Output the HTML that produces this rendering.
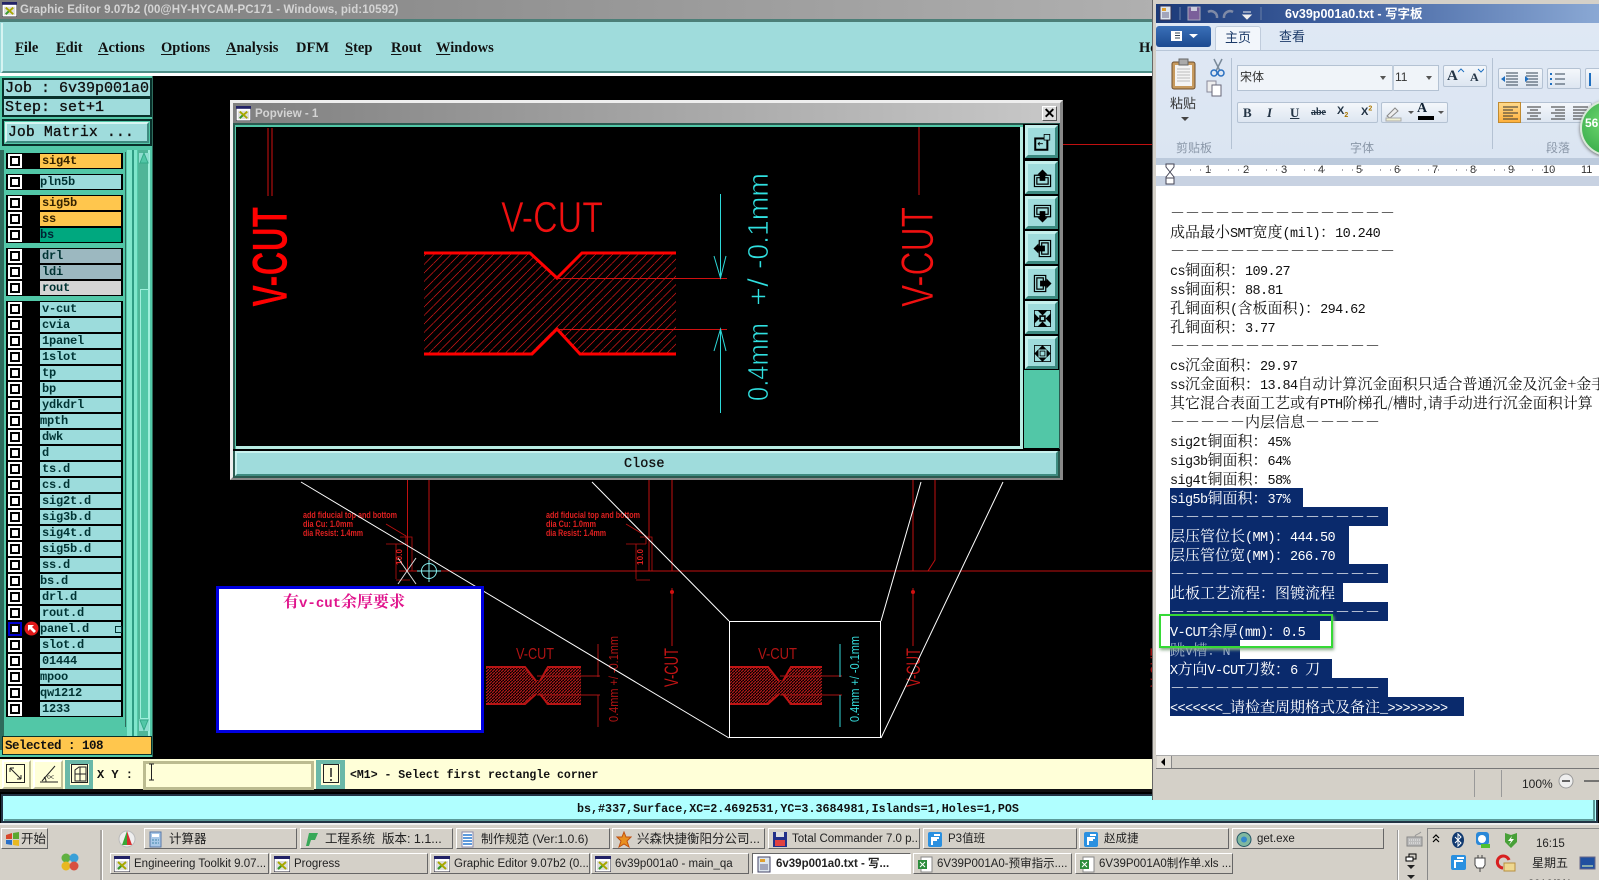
<!DOCTYPE html>
<html><head><meta charset="utf-8"><title>Graphic Editor</title>
<style>
html,body{margin:0;padding:0;background:#000}
#p{position:relative;width:1599px;height:880px;overflow:hidden;background:#000;font-family:"Liberation Sans","Noto Sans CJK SC",sans-serif}
#p div,#p span.a,#p svg.a{position:absolute}
.m{top:39px;font:bold 14.5px/18px "Liberation Serif",serif;color:#111;white-space:nowrap}
.m u{text-underline-offset:2px}
.mono{font-family:"Liberation Mono",monospace;color:#111;white-space:pre}
.st{-webkit-text-stroke:.35px #111}
.r{left:6px;width:117px;height:16px;background:#000}
.r i{position:absolute;left:2px;top:1px;width:14px;height:14px;background:#fff;box-shadow:inset 0 0 0 2px #fff,inset 0 0 0 4px #000}
.r b{position:absolute;left:34px;top:1px;width:81px;height:14px;background:#9cdcdc;font:bold 12px/14px "Liberation Mono",monospace;letter-spacing:-.2px;color:#033;padding-left:2px;box-sizing:border-box;white-space:pre}
.t b{padding-left:0}
.y b{background:#ffc64d;color:#320}.g b{background:#00a87f;color:#023}.s b{background:#9cb8c0}.w b{background:#d4d4d4}
.pb{left:1025px;width:33px;height:33px;background:#9fdcdc;border:3px solid;border-color:#c4f0ec #3b8a80 #3b8a80 #c4f0ec;box-sizing:border-box}
.pb svg{position:absolute;left:2px;top:2px}
.tb{height:21px;background:#d4d0c8;border:1px solid;border-color:#fff #666 #666 #fff;box-sizing:border-box;font-size:11.5px;line-height:20px;color:#222;white-space:nowrap;overflow:hidden;padding-left:24px}
.tb svg{position:absolute;left:3px;top:2px}
.l{left:1170px;height:19px;white-space:pre;font:13.5px/19px "Liberation Mono",monospace;letter-spacing:-.6px;color:#111}
.l i{font:15px/19px "Noto Serif CJK SC","Noto Sans CJK SC",serif;font-style:normal;letter-spacing:0}
.h{background:#0a2a6c;color:#fff}
.rb{font-size:12px;color:#333;white-space:nowrap}
.gl{font-size:12px;color:#8a97a8;white-space:nowrap;top:139px}
.bx{background:linear-gradient(#f4f7fb,#dde6f1);border:1px solid #b4c2d3;border-radius:2px;box-sizing:border-box}
.rn{top:163px;font-size:11px;color:#333;line-height:14px}
</style></head><body>
<div id="p">
<svg width="0" height="0" style="position:absolute"><defs>
<pattern id="ht" patternUnits="userSpaceOnUse" width="8.500" height="8.500"><path d="M0 8.500L8.500 0" stroke="#d81818" stroke-width=".7"/></pattern>
<pattern id="hd" patternUnits="userSpaceOnUse" width="3" height="3"><path d="M0 3L3 0" stroke="#b01818" stroke-width="1.300"/></pattern>
<symbol id="xi" viewBox="0 0 16 16"><rect width="16" height="16" fill="#fff" stroke="#223" stroke-width="1"/><rect width="16" height="3" fill="#226"/><rect x="2" y="5" width="12" height="9" fill="#ddd"/><path d="M4 6l8 7M12 6l-8 7" stroke="#a8a800" stroke-width="2"/><path d="M4 13l3-3" stroke="#393" stroke-width="2"/></symbol>
</defs></svg>

<!-- title bar -->
<div style="left:0;top:0;width:1160px;height:19px;background:linear-gradient(90deg,#7c7c7c,#b0b0b0)"></div>
<svg class="a" style="left:2px;top:2px" width="15" height="15"><use href="#xi"/></svg>
<div style="left:20px;top:3px;font:bold 11.5px/15px 'Liberation Sans';color:#d4d4d4;white-space:nowrap;letter-spacing:.07px">Graphic Editor 9.07b2 (00@HY-HYCAM-PC171 - Windows, pid:10592)</div>
<!-- menu -->
<div style="left:0;top:19px;width:1160px;height:57px;background:#9fdcdc;border-top:3px solid #4c7f78;border-bottom:3px solid #fff;box-sizing:border-box"></div>
<div style="left:1px;top:23px;width:1160px;height:50px;border-left:2px solid #d6f4f2;border-bottom:2px solid #4f8f88;box-sizing:border-box"></div>
<div class="m" style="left:15px"><u>F</u>ile</div><div class="m" style="left:56px"><u>E</u>dit</div><div class="m" style="left:98px"><u>A</u>ctions</div><div class="m" style="left:161px"><u>O</u>ptions</div><div class="m" style="left:226px"><u>A</u>nalysis</div><div class="m" style="left:296px">DFM</div><div class="m" style="left:345px"><u>S</u>tep</div><div class="m" style="left:391px"><u>R</u>out</div><div class="m" style="left:436px"><u>W</u>indows</div><div class="m" style="left:1139px">He</div>

<!-- canvas drawing -->
<svg class="a" style="left:0;top:0" width="1599" height="880" font-family="Liberation Sans">
<g stroke="#c01010" fill="none" stroke-width="1">
<path d="M399 571H1153M407.5 480V571M429 480V571M649 480V571M672 480V571M913 480V571M935 480V560L928 571M1063 144.500H1153" />
<path d="M386 524l20 12v8M400 537h12v34M396 544v35M386 544h20M626 524l20 12v8M640 537h12v34M636 544v35M626 544h20M396 580h14M636 580h14" stroke-width=".8"/>
<path d="M672 588V646M913 588V646"/>
</g>
<circle cx="672" cy="592" r="2" fill="#d01010"/><circle cx="913" cy="592" r="2" fill="#d01010"/>
<g fill="#e02020" font-size="9" font-weight="bold" font-family="Liberation Sans">
<text x="303" y="518" textLength="94" lengthAdjust="spacingAndGlyphs">add fiducial top and bottom</text>
<text x="303" y="527" textLength="50" lengthAdjust="spacingAndGlyphs">dia Cu: 1.0mm</text>
<text x="303" y="536" textLength="60" lengthAdjust="spacingAndGlyphs">dia Resist: 1.4mm</text>
<text x="546" y="518" textLength="94" lengthAdjust="spacingAndGlyphs">add fiducial top and bottom</text>
<text x="546" y="527" textLength="50" lengthAdjust="spacingAndGlyphs">dia Cu: 1.0mm</text>
<text x="546" y="536" textLength="60" lengthAdjust="spacingAndGlyphs">dia Resist: 1.4mm</text>
<text transform="translate(402,565) rotate(-90)" textLength="16" font-size="8">10.0</text>
<text transform="translate(643,565) rotate(-90)" textLength="16" font-size="8">10.0</text>
</g>
<!-- small vcuts -->
<g fill="#a81515">
<path d="M486 666h38l10 14 6 0 7-14h34v39h-34l-7-10h-6l-10 10h-38z" fill="url(#hd)"/>
<path d="M486 667h39l11 14M540 681l8-14h33M486 704h39l11-10M540 694l8 10h33" fill="none" stroke="#b81414" stroke-width="2"/>
<path d="M729 666h38l10 14 6 0 7-14h32v39h-32l-7-10h-6l-10 10h-38z" fill="url(#hd)"/>
<path d="M729 667h39l11 14M783 681l8-14h31M729 704h39l11-10M783 694l8 10h31" fill="none" stroke="#c01414" stroke-width="2"/>
</g>
<g stroke="#a81515" fill="none"><path d="M537 676h63M537 695h63M598 644v33M598 695v32"/><path d="M780 676h62M780 695h62" /></g>
<path d="M840 644v33M840 695v32" stroke="#35d8d8" fill="none"/>
<text x="516" y="659" font-size="16" fill="#b01414" textLength="38" lengthAdjust="spacingAndGlyphs">V-CUT</text>
<text x="758" y="659" font-size="16" fill="#b01414" textLength="39" lengthAdjust="spacingAndGlyphs">V-CUT</text>
<text transform="translate(618,722) rotate(-90)" font-size="13" fill="#b01414" textLength="86" lengthAdjust="spacingAndGlyphs">0.4mm +/ -0.1mm</text>
<text transform="translate(859,722) rotate(-90)" font-size="13" fill="#35d8d8" textLength="86" lengthAdjust="spacingAndGlyphs">0.4mm +/ -0.1mm</text>
<text transform="translate(678,687) rotate(-90)" font-size="19" fill="#c01414" textLength="39" lengthAdjust="spacingAndGlyphs">V-CUT</text>
<text transform="translate(920,687) rotate(-90)" font-size="19" fill="#c01414" textLength="39" lengthAdjust="spacingAndGlyphs">V-CUT</text>
<text transform="translate(1164,687) rotate(-90)" font-size="19" fill="#a01010" textLength="39" lengthAdjust="spacingAndGlyphs">V-CUT</text>
<!-- white lines -->
<g stroke="#fff" fill="none" stroke-width="1">
<rect x="729.500" y="621.500" width="151" height="116"/>
<path d="M301 482L729 738M592 482L729 621M881 621L921 482M881 738L1003 482"/>
<path d="M398 558l18 26M416 558l-18 26" stroke="#ddd"/>
</g>
<circle cx="429" cy="571" r="7.500" fill="none" stroke="#8ee"/><path d="M429 560v22M417 571h24" stroke="#8ee"/>
</svg>

<!-- left panel -->
<div style="left:0;top:76px;width:153px;height:681px;background:#52c7a7;border-right:1px solid #2e6b5c;box-sizing:border-box"></div>
<div style="left:2px;top:78px;width:150px;height:20px;background:#9fdcdc;border:2px solid #08302a;box-sizing:border-box"></div>
<div style="left:2px;top:97px;width:150px;height:20px;background:#9fdcdc;border:2px solid #08302a;box-sizing:border-box"></div>
<div class="mono st" style="left:5px;top:80px;font-size:15px;line-height:18px">Job : 6v39p001a0</div>
<div class="mono st" style="left:5px;top:99px;font-size:15px;line-height:18px">Step: set+1</div>
<div style="left:2px;top:119px;width:150px;height:27px;background:#52c7a7;border:2px solid #08302a;box-sizing:border-box"></div>
<div style="left:5px;top:122px;width:144px;height:21px;background:#9fdcdc;border:2px solid;border-color:#d8f6f2 #3e8b80 #3e8b80 #d8f6f2;box-sizing:border-box"></div>
<div class="mono st" style="left:8px;top:125px;font-size:14.500px;line-height:17px;letter-spacing:.3px">Job Matrix ...</div>
<!-- list -->
<div style="left:0;top:150px;width:4px;height:600px;background:#2e6b5c"></div>
<div style="left:5px;top:152px;width:120px;height:575px;background:#52c7a7;border-right:1px solid #2e6b5c"></div>
<div style="left:127px;top:150px;width:5px;height:600px;background:#7fe6cc"></div>
<div style="left:132px;top:150px;width:2px;height:600px;background:#2f9c84"></div>
<div style="left:134px;top:150px;width:3px;height:600px;background:#7fe6cc"></div>
<div style="left:138px;top:150px;width:12px;height:602px;background:#4fb598;border-right:2px solid #9ff0dc;box-sizing:border-box"></div>
<div style="left:139px;top:153px;width:10px;height:10px;background:#8fded0"></div>
<div style="left:140px;top:289px;width:9px;height:430px;background:#52c7a7;border:1px solid #9ff0dc;box-sizing:border-box"></div>
<div style="left:139px;top:719px;width:10px;height:12px;background:#8fded0"></div>
<svg class="a" style="left:139px;top:152px" width="10" height="12"><path d="M5 1L9 11H1Z" fill="#52c7a7" stroke="#3a8"/></svg>
<svg class="a" style="left:139px;top:719px" width="10" height="12"><path d="M5 11L9 1H1Z" fill="#52c7a7" stroke="#3a8"/></svg>

<div class="r y" style="top:153px"><i></i><b>sig4t</b></div>
<div class="r t" style="top:174px"><i></i><b>pln5b</b></div>
<div class="r y" style="top:195px"><i></i><b>sig5b</b></div>
<div class="r y" style="top:211px"><i></i><b>ss</b></div>
<div class="r g t" style="top:227px"><i></i><b>bs</b></div>
<div class="r s" style="top:248px"><i></i><b>drl</b></div>
<div class="r s" style="top:264px"><i></i><b>ldi</b></div>
<div class="r w" style="top:280px"><i></i><b>rout</b></div>
<div class="r" style="top:301px"><i></i><b>v-cut</b></div>
<div class="r" style="top:317px"><i></i><b>cvia</b></div>
<div class="r" style="top:333px"><i></i><b>1panel</b></div>
<div class="r" style="top:349px"><i></i><b>1slot</b></div>
<div class="r" style="top:365px"><i></i><b>tp</b></div>
<div class="r" style="top:381px"><i></i><b>bp</b></div>
<div class="r" style="top:397px"><i></i><b>ydkdrl</b></div>
<div class="r t" style="top:413px"><i></i><b>mpth</b></div>
<div class="r" style="top:429px"><i></i><b>dwk</b></div>
<div class="r" style="top:445px"><i></i><b>d</b></div>
<div class="r" style="top:461px"><i></i><b>ts.d</b></div>
<div class="r" style="top:477px"><i></i><b>cs.d</b></div>
<div class="r" style="top:493px"><i></i><b>sig2t.d</b></div>
<div class="r" style="top:509px"><i></i><b>sig3b.d</b></div>
<div class="r" style="top:525px"><i></i><b>sig4t.d</b></div>
<div class="r" style="top:541px"><i></i><b>sig5b.d</b></div>
<div class="r" style="top:557px"><i></i><b>ss.d</b></div>
<div class="r t" style="top:573px"><i></i><b>bs.d</b></div>
<div class="r" style="top:589px"><i></i><b>drl.d</b></div>
<div class="r" style="top:605px"><i></i><b>rout.d</b></div>
<div class="r t" style="top:621px"><i style="box-shadow:inset 0 0 0 2px #00c,inset 0 0 0 4px #000"></i><b>panel.d</b></div>
<div class="r" style="top:637px"><i></i><b>slot.d</b></div>
<div class="r" style="top:653px"><i></i><b>01444</b></div>
<div class="r t" style="top:669px"><i></i><b>mpoo</b></div>
<div class="r t" style="top:685px"><i></i><b>qw1212</b></div>
<div class="r" style="top:701px"><i></i><b>1233</b></div>
<svg class="a" style="left:24px;top:621px" width="15" height="15"><circle cx="7.500" cy="7.500" r="7" fill="#e01818"/><path d="M4 4h6l-2 2 4 4-2 2-4-4-2 2z" fill="#fff"/></svg>
<div style="left:115px;top:626px;width:5px;height:5px;border:1px solid #033;background:#9cdcdc"></div>

<div style="left:2px;top:736px;width:150px;height:19px;background:#ffc64d;border:1px solid #08302a;box-sizing:border-box"></div>
<div class="mono" style="left:5px;top:738px;font:bold 12.500px/17px 'Liberation Mono';letter-spacing:-.5px">Selected : 108</div>

<!-- bottom toolbar -->
<div style="left:0;top:759px;width:1160px;height:33px;background:#ffffd8;border-bottom:3px solid #111;box-sizing:border-box"></div>
<div style="left:2px;top:760px;width:29px;height:29px;background:#ffffd8;border:2px solid;border-color:#fff #c0c098 #c0c098 #fff;box-sizing:border-box"></div>
<div style="left:33px;top:760px;width:30px;height:29px;background:#ffffd8;border:2px solid;border-color:#fff #c0c098 #c0c098 #fff;box-sizing:border-box"></div>
<div style="left:65px;top:760px;width:28px;height:29px;background:#6ab8a8"></div>
<div style="left:70px;top:764px;width:19px;height:21px;background:#ffffd8"></div>
<div style="left:316px;top:760px;width:29px;height:29px;background:#6ab8a8"></div>
<div style="left:321px;top:764px;width:19px;height:21px;background:#ffffd8"></div>
<svg class="a" style="left:0;top:759px" width="350" height="32" fill="none" stroke="#222">
<rect x="6.500" y="5.500" width="18" height="18"/><path d="M10 9l11 11M10 9h4M10 9v4M21 20h-4M21 20v-4"/>
<path d="M40 23h18M42 22L55 7M46 23a6 6 0 0 0-2-5"/><text x="47" y="21" font-size="8" fill="#222" stroke="none">∝</text>
<rect x="71.500" y="5.500" width="16" height="18"/><path d="M75 22V11l4-3h7v14zM75 15h11M80 8v14"/>
<rect x="323.500" y="5.500" width="15" height="18"/><path d="M331 9v9M331 20v2" stroke-width="1.500"/>
</svg>
<div class="mono" style="left:97px;top:767px;font:bold 12px/16px 'Liberation Mono'">X Y :</div>
<div style="left:143px;top:761px;width:171px;height:29px;background:#ffffd8;border:3px solid #bcbc90;box-sizing:border-box"></div>
<svg class="a" style="left:148px;top:763px" width="7" height="18"><path d="M1 1h5M3.500 1v16M1 17h5" stroke="#222" fill="none"/></svg>
<div class="mono" style="left:350px;top:768px;font:bold 11.500px/16px 'Liberation Mono'">&lt;M1&gt; - Select first rectangle corner</div>

<!-- status bar -->
<div style="left:1px;top:794px;width:1597px;height:29px;background:#b0ffff;border:2px solid #234;box-sizing:border-box"></div>
<div style="left:4px;top:796px;width:1591px;height:25px;border-bottom:2px solid #5a9a98;border-right:2px solid #5a9a98;box-sizing:border-box"></div>
<div class="mono" style="left:577px;top:801px;font:bold 11.700px/16px 'Liberation Mono'">bs,#337,Surface,XC=2.4692531,YC=3.3684981,Islands=1,Holes=1,POS</div>

<!-- popup -->
<div style="left:230px;top:100px;width:833px;height:380px;background:#c8c8c8;border:3px solid;border-color:#eee #888 #888 #eee;box-sizing:border-box"></div>
<div style="left:233px;top:103px;width:827px;height:20px;background:linear-gradient(90deg,#808080,#c8c8c8)"></div>
<svg class="a" style="left:236px;top:106px" width="15" height="15"><use href="#xi"/></svg>
<div style="left:255px;top:107px;font:bold 11.500px/15px 'Liberation Sans';color:#d4d4d4">Popview - 1</div>
<div style="left:1042px;top:106px;width:15px;height:15px;background:#ddd;border:1px solid;border-color:#fff #555 #555 #fff;box-sizing:border-box;font:bold 14px/13px 'Liberation Sans';text-align:center;color:#000">✕</div>
<div style="left:233px;top:123px;width:827px;height:355px;background:#52c7a7;border:2px solid #2b5a50;box-sizing:border-box"></div>
<div style="left:236px;top:127px;width:787px;height:322px;background:#000;border-right:3px solid #b8ece2;border-bottom:3px solid #b8ece2;box-sizing:border-box"></div>
<div style="left:1023px;top:124px;width:2px;height:327px;background:#000"></div>
<div style="left:1024px;top:124px;width:35px;height:326px;background:#000"></div>
<div style="left:1024px;top:370px;width:35px;height:78px;background:#52c7a7"></div>
<div style="left:233px;top:449px;width:827px;height:2px;background:#000"></div>
<div style="left:235px;top:451px;width:823px;height:25px;background:#9fdcdc;border:2px solid;border-color:#c8f2ee #3e8b80 #3e8b80 #c8f2ee;box-sizing:border-box"></div>
<div class="mono st" style="left:624px;top:456px;font-size:13.500px;line-height:17px">Close</div>

<div class="pb" style="top:125px"><svg width="25" height="25" viewBox="-3 -3 31 31" fill="none" stroke="#000"><rect x="3.500" y="7.500" width="15" height="14" stroke-width="2.500"/><rect x="14.500" y="2.500" width="7" height="7" fill="#9fdcdc"/><path d="M13 14H7M9 12l-2 2 2 2"/></svg></div>
<div class="pb" style="top:161px"><svg width="25" height="25" viewBox="-3 -3 31 31" fill="none" stroke="#000"><path d="M2.500 8.500h20v14h-20zM5.500 11.500h14v8h-14z" stroke-width="1.500"/><path d="M12.500 2l5 5h-2v8h-6V7h-2z" fill="#000"/></svg></div>
<div class="pb" style="top:196px"><svg width="25" height="25" viewBox="-3 -3 31 31" fill="none" stroke="#000"><path d="M2.500 2.500h20v14h-20zM5.500 5.500h14v8h-14z" stroke-width="1.500"/><path d="M12.500 23l5-5h-2v-8h-6v8h-2z" fill="#000"/></svg></div>
<div class="pb" style="top:231px"><svg width="25" height="25" viewBox="-3 -3 31 31" fill="none" stroke="#000"><path d="M8.500 2.500h14v20h-14zM11.500 5.500h8v14h-8z" stroke-width="1.500"/><path d="M2 12.500l5-5v2h8v6H7v2z" fill="#000"/></svg></div>
<div class="pb" style="top:266px"><svg width="25" height="25" viewBox="-3 -3 31 31" fill="none" stroke="#000"><path d="M2.500 2.500h14v20h-14zM5.500 5.500h8v14h-8z" stroke-width="1.500"/><path d="M23 12.500l-5-5v2h-8v6h8v2z" fill="#000"/></svg></div>
<div class="pb" style="top:301px"><svg width="25" height="25" viewBox="-3 -3 31 31" fill="#000" stroke="#000"><rect x="2.500" y="2.500" width="20" height="20" fill="none"/><rect x="9.500" y="9.500" width="6" height="6" fill="none" stroke-width="2"/><path d="M12.500 8l-5-5h10zM12.500 17l-5 5h10zM8 12.500l-5-5v10zM17 12.500l5-5v10z"/></svg></div>
<div class="pb" style="top:336px"><svg width="25" height="25" viewBox="-3 -3 31 31" fill="#000" stroke="#000"><rect x="2.500" y="2.500" width="20" height="20" fill="none"/><rect x="9.500" y="9.500" width="6" height="6" fill="none"/><path d="M12.500 3l-4 4h8zM12.500 22l-4-4h8zM3 12.500l4-4v8zM22 12.500l-4-4v8z"/></svg></div>

<!-- popup drawing -->
<svg class="a" style="left:0;top:0" width="1599" height="880" font-family="Liberation Sans">
<path d="M424 254H530L557 279L582 254H676V354H580L557 329L532 354H424Z" fill="url(#ht)"/>
<path d="M424 253H530L557 278L582 253H676M424 354H532L557 329L580 354H676" fill="none" stroke="#f00" stroke-width="3"/>
<path d="M557 278.500H727M557 329.500H727" stroke="#d01010" fill="none"/>
<path d="M268 128V196M272 128V196M919 127V195" stroke="#d01010" fill="none"/>
<path d="M720.500 194V278M720.500 329V413M714 256L720.500 278L726 256M714 351L720.500 329L726 351" stroke="#2dd8d8" fill="none"/>
<g stroke="#000" stroke-width=".7">
<text x="501" y="232" font-size="44" fill="#f01010" textLength="102" lengthAdjust="spacingAndGlyphs">V-CUT</text>
<text transform="translate(287,307) rotate(-90)" font-size="50" font-weight="bold" fill="#f00" textLength="100" lengthAdjust="spacingAndGlyphs">V-CUT</text>
<text transform="translate(933,307) rotate(-90)" font-size="45" fill="#f01010" textLength="100" lengthAdjust="spacingAndGlyphs">V-CUT</text>
<text transform="translate(768,401) rotate(-90)" font-size="29" fill="#30e0e0" textLength="78" lengthAdjust="spacingAndGlyphs">0.4mm</text>
<text transform="translate(768,306) rotate(-90)" font-size="29" fill="#30e0e0" textLength="28" lengthAdjust="spacingAndGlyphs">+/</text>
<text transform="translate(768,269) rotate(-90)" font-size="29" fill="#30e0e0" textLength="96" lengthAdjust="spacingAndGlyphs">-0.1mm</text>
</g>
</svg>

<!-- white note -->
<div style="left:216px;top:586px;width:268px;height:147px;background:#fff;border:3px solid #0000e0;box-sizing:border-box"></div>
<div style="left:283px;top:593px;font:bold 16px/20px 'Liberation Serif','Noto Serif CJK SC',serif;color:#e0148c;white-space:nowrap">有<span style="font:bold 14px/20px 'Liberation Mono'">v-cut</span>余厚要求</div>

<!-- wordpad -->
<div style="left:1152px;top:0;width:447px;height:800px;background:#d4d0c8;border-left:1px solid #666"></div>
<div style="left:1156px;top:4px;width:443px;height:19px;background:linear-gradient(90deg,#1c3a78,#3e5f9e 40%,#8aa8d4)"></div>
<div style="left:1156px;top:23px;width:443px;height:135px;background:linear-gradient(#dfe8f4,#dbe5f2)"></div>
<svg class="a" style="left:1158px;top:4px" width="130" height="19" fill="none">
<rect x="2" y="2" width="11" height="14" fill="#dde6ee" stroke="#335"/><rect x="4" y="4" width="4" height="3" fill="#e0a030"/><path d="M4 9h7M4 11h7M4 13h7" stroke="#668"/>
<path d="M22 3v13" stroke="#6a7fa6"/>
<rect x="30" y="3" width="12" height="13" fill="#7a5f9a" stroke="#aab"/><rect x="33" y="3" width="6" height="4" fill="#ccd"/>
<path d="M50 8a6 6 0 0 1 9 6" stroke="#7f8aa6" stroke-width="2.500"/><path d="M75 8a6 6 0 0 0-9 6" stroke="#7f8aa6" stroke-width="2.500"/>
<path d="M85 8h8M85 11h8l-4 4z" fill="#eee" stroke="#eee"/><path d="M103 3v13" stroke="#6a7fa6"/></svg>
<div style="left:1285px;top:6px;font-weight:bold;font-size:12.500px;line-height:17px;color:#fff;white-space:nowrap">6v39p001a0.txt - 写字板</div>
<div style="left:1156px;top:26px;width:55px;height:21px;background:linear-gradient(#3a70b8,#1c4a90);border-radius:3px"></div>
<svg class="a" style="left:1170px;top:30px" width="30" height="12"><rect x="1" y="1" width="11" height="10" fill="#fff"/><path d="M5 3h5M5 5.500h5M5 8h5" stroke="#345"/><path d="M19 4h9l-4.500 4z" fill="#fff"/></svg>
<div style="left:1215px;top:26px;width:46px;height:25px;background:#f2f6fb;border:1px solid #c0ccdc;border-bottom:0;border-radius:3px 3px 0 0;box-sizing:border-box;text-align:center;font-size:13px;line-height:22px;color:#1c3a68">主页</div>
<div style="left:1279px;top:28px;font-size:13px;line-height:18px;color:#1c3a68">查看</div>
<div style="left:1156px;top:50px;width:443px;height:1px;background:#b8c6d8"></div>
<!-- clipboard -->
<svg class="a" style="left:1170px;top:57px" width="56" height="42" fill="none">
<rect x="2" y="5" width="23" height="27" rx="2" fill="#c79a5e" stroke="#6e5030"/><rect x="5" y="8" width="17" height="21" fill="#f4f4f4"/><path d="M7 12h13M7 15h13M7 18h13M7 21h13M7 24h13" stroke="#bbb"/><rect x="9" y="2" width="9" height="6" fill="#aaa" stroke="#666"/>
<path d="M44 2l6 12M52 2l-6 12" stroke="#7a8a9a" stroke-width="1.500"/><circle cx="44" cy="16" r="3" stroke="#2a70c0" stroke-width="1.500"/><circle cx="51" cy="16" r="3" stroke="#2a70c0" stroke-width="1.500"/>
<rect x="37" y="24" width="9" height="11" fill="#eee" stroke="#889"/><rect x="42" y="28" width="9" height="11" fill="#fff" stroke="#667"/></svg>
<div class="rb" style="left:1170px;top:95px;font-size:13px;line-height:18px">粘贴</div>
<svg class="a" style="left:1180px;top:117px" width="10" height="5"><path d="M1 0h8L5 4z" fill="#444"/></svg>
<div class="gl" style="left:1176px">剪贴板</div><div class="gl" style="left:1350px">字体</div><div class="gl" style="left:1546px">段落</div>
<div style="left:1231px;top:58px;width:1px;height:91px;background:#b4c2d3"></div>
<div style="left:1492px;top:58px;width:1px;height:91px;background:#b4c2d3"></div>
<div style="left:1237px;top:65px;width:202px;height:26px;background:#f0f4f9;border:1px solid #b4c2d3;box-sizing:border-box"></div>
<div style="left:1392px;top:65px;width:2px;height:26px;background:#c0cddc"></div>
<div class="rb" style="left:1240px;top:69px;line-height:17px">宋体</div>
<div class="rb" style="left:1395px;top:69px;line-height:17px">11</div>
<svg class="a" style="left:1380px;top:76px" width="60" height="5"><path d="M0 0h6L3 4zM46 0h6l-3 4z" fill="#555"/></svg>
<div class="bx" style="left:1443px;top:65px;width:44px;height:22px"></div>
<div style="left:1447px;top:67px;font:bold 15px/18px 'Liberation Serif';color:#234">A</div>
<div style="left:1470px;top:69px;font:bold 12px/16px 'Liberation Serif';color:#234">A</div>
<svg class="a" style="left:1458px;top:68px" width="26" height="6"><path d="M0 4l3-3 3 3M20 1l3 3 3-3" stroke="#1f6fc0" fill="none"/></svg>
<div class="bx" style="left:1237px;top:102px;width:141px;height:21px"></div>
<div style="left:1243px;top:103px;font:bold 13px/19px 'Liberation Serif';color:#234">B</div>
<div style="left:1267px;top:103px;font:italic bold 13px/19px 'Liberation Serif';color:#234">I</div>
<div style="left:1290px;top:103px;font:bold 13px/19px 'Liberation Serif';color:#234;text-decoration:underline">U</div>
<div style="left:1311px;top:105px;font:bold 10px/15px 'Liberation Serif';color:#234;text-decoration:line-through">abe</div>
<div style="left:1337px;top:103px;font:bold 11px/17px 'Liberation Sans';color:#234">X<sub style="font-size:7px;color:#a70">2</sub></div>
<div style="left:1361px;top:104px;font:bold 11px/17px 'Liberation Sans';color:#234">X<sup style="font-size:7px;color:#a70;line-height:0">2</sup></div>
<div class="bx" style="left:1381px;top:102px;width:67px;height:21px"></div>
<svg class="a" style="left:1385px;top:103px" width="60" height="19" fill="none"><path d="M2 13l8-8 3 3-8 7z" stroke="#888" fill="#eee"/><rect x="1" y="15" width="15" height="3" fill="#f0f0d0" stroke="#aaa"/><path d="M23 8h6l-3 3z" fill="#555"/><path d="M53 8h6l-3 3z" fill="#555"/></svg>
<div style="left:1417px;top:101px;font:bold 14px/16px 'Liberation Serif';color:#123">A</div>
<div style="left:1418px;top:116px;width:16px;height:4px;background:#000"></div>
<div class="bx" style="left:1498px;top:68px;width:45px;height:21px"></div>
<div class="bx" style="left:1547px;top:68px;width:34px;height:21px"></div>
<div class="bx" style="left:1585px;top:68px;width:20px;height:21px"></div>
<svg class="a" style="left:1500px;top:70px" width="99" height="18" fill="none" stroke="#345"><path d="M6 3h12M6 6h12M6 9h12M6 12h12M6 15h12M26 3h12M26 6h12M26 9h12M26 12h12M26 15h12M55 4h10M55 9h10M55 14h10"/><path d="M1 9l4-3v6zM25 6l4 3-4 3z" fill="#1f6fc0" stroke="none"/><path d="M50 4h2M50 9h2M50 14h2M90 3v13" stroke="#1f6fc0" stroke-width="2"/></svg>
<div class="bx" style="left:1498px;top:102px;width:94px;height:21px"></div>
<div style="left:1498px;top:102px;width:23px;height:21px;background:linear-gradient(#ffd98a,#ffb13d);border:1px solid #c08a30;box-sizing:border-box"></div>
<svg class="a" style="left:1500px;top:104px" width="92" height="17" stroke="#333"><path d="M3 3h15M3 6h10M3 9h15M3 12h10M3 15h15M27 3h14M30 6h8M27 9h14M30 12h8M27 15h14M51 3h14M55 6h10M51 9h14M55 12h10M51 15h14M73 3h15M73 6h15M73 9h15M73 12h15M73 15h15"/></svg>
<div style="left:1580px;top:100px;width:56px;height:56px;border-radius:50%;background:radial-gradient(circle at 45% 40%,#6fd870,#2aa040);border:2px solid #d8e8d8;box-sizing:border-box;box-shadow:0 1px 3px #666"></div>
<div style="left:1585px;top:115px;font:bold 12px/16px 'Liberation Sans';color:#fff">56</div>
<!-- ruler -->
<div style="left:1156px;top:158px;width:443px;height:28px;background:#bccadc"></div>
<div style="left:1156px;top:165px;width:443px;height:11px;background:#fff"></div>
<div style="left:1156px;top:176px;width:443px;height:10px;background:#c8d2e2"></div>
<div class="rn a" style="left:1205px;top:163px">1</div><div class="rn" style="left:1243px">2</div><div class="rn" style="left:1281px">3</div><div class="rn" style="left:1318px">4</div><div class="rn" style="left:1356px">5</div><div class="rn" style="left:1394px">6</div><div class="rn" style="left:1432px">7</div><div class="rn" style="left:1470px">8</div><div class="rn" style="left:1508px">9</div><div class="rn" style="left:1543px">10</div><div class="rn" style="left:1581px">11</div>
<svg class="a" style="left:1160px;top:163px" width="440" height="22"><path d="M6 1h8v3l-4 5-4-5zM10 9l4 5v2H6v-2z" fill="#fff" stroke="#445"/><rect x="6" y="15" width="8" height="6" fill="#fff" stroke="#445"/><path d="M30 7h1M40 7h1M50 7h1M68 7h1M78 7h1M88 7h1M106 7h1M116 7h1M126 7h1M144 7h1M154 7h1M164 7h1M182 7h1M192 7h1M202 7h1M220 7h1M230 7h1M240 7h1M258 7h1M268 7h1M278 7h1M296 7h1M306 7h1M316 7h1M334 7h1M344 7h1M354 7h1M372 7h1M382 7h1M392 7h1" stroke="#556" stroke-width="1"/></svg>
<!-- document -->
<div style="left:1156px;top:186px;width:443px;height:569px;background:#fff"></div>
<div class="l" style="top:203px"><i>－－－－－－－－－－－－－－－</i></div>
<div class="l" style="top:222px"><i>成品最小</i>SMT<i>宽度</i>(mil)<i>：</i>10.240</div>
<div class="l" style="top:241px"><i>－－－－－－－－－－－－－－－</i></div>
<div class="l" style="top:260px">cs<i>铜面积：</i>109.27</div>
<div class="l" style="top:279px">ss<i>铜面积：</i>88.81</div>
<div class="l" style="top:298px"><i>孔铜面积</i>(<i>含板面积</i>)<i>：</i>294.62</div>
<div class="l" style="top:317px"><i>孔铜面积：</i>3.77</div>
<div class="l" style="top:336px"><i>－－－－－－－－－－－－－－</i></div>
<div class="l" style="top:355px">cs<i>沉金面积：</i>29.97</div>
<div class="l" style="top:374px">ss<i>沉金面积：</i>13.84<i>自动计算沉金面积只适合普通沉金及沉金+金手指</i></div>
<div class="l" style="top:393px"><i>其它混合表面工艺或有</i>PTH<i>阶梯孔/槽时,请手动进行沉金面积计算</i></div>
<div class="l" style="top:412px"><i>－－－－－内层信息－－－－－</i></div>
<div class="l" style="top:431px">sig2t<i>铜面积：</i>45%</div>
<div class="l" style="top:450px">sig3b<i>铜面积：</i>64%</div>
<div class="l" style="top:469px">sig4t<i>铜面积：</i>58%</div>
<div class="l h" style="top:488px;width:133px">sig5b<i>铜面积：</i>37%</div>
<div class="l h" style="top:507px;width:218px"><i>－－－－－－－－－－－－－－</i></div>
<div class="l h" style="top:526px;width:179px"><i>层压管位长</i>(MM)<i>：</i>444.50</div>
<div class="l h" style="top:545px;width:179px"><i>层压管位宽</i>(MM)<i>：</i>266.70</div>
<div class="l h" style="top:564px;width:218px"><i>－－－－－－－－－－－－－－</i></div>
<div class="l h" style="top:583px;width:173px"><i>此板工艺流程：图镀流程</i></div>
<div class="l h" style="top:602px;width:218px"><i>－－－－－－－－－－－－－－</i></div>
<div class="l h" style="top:621px;width:150px">V-CUT<i>余厚</i>(mm)<i>：</i>0.5</div>
<div class="l h" style="top:640px;width:70px;color:#9fb0cc"><i>跳</i>V<i>槽：</i>N</div>
<div class="l h" style="top:659px;width:162px">X<i>方向</i>V-CUT<i>刀数：</i>6 <i>刀</i></div>
<div class="l h" style="top:678px;width:218px"><i>－－－－－－－－－－－－－－</i></div>
<div class="l h" style="top:697px;width:294px">&lt;&lt;&lt;&lt;&lt;&lt;&lt;_<i>请检查周期格式及备注</i>_&gt;&gt;&gt;&gt;&gt;&gt;&gt;&gt;</div>
<div style="left:1159px;top:614px;width:174px;height:34px;border:2px solid #36d936;box-sizing:border-box;box-shadow:1px 2px 3px #8a8"></div>
<!-- bottom of wordpad -->
<div style="left:1156px;top:755px;width:443px;height:14px;background:#d4d0c8;border-top:1px solid #aaa;border-bottom:1px solid #777;box-sizing:border-box"></div>
<div style="left:1157px;top:756px;width:14px;height:12px;background:#e4e0d8;border-right:1px solid #888"></div>
<svg class="a" style="left:1160px;top:758px" width="7" height="8"><path d="M5 0v8L1 4z" fill="#000"/></svg>
<div style="left:1474px;top:770px;width:1px;height:27px;background:#999"></div>
<div style="left:1501px;top:770px;width:1px;height:27px;background:#999"></div>
<div style="left:1522px;top:777px;font-size:12px;line-height:14px;color:#222">100%</div>
<svg class="a" style="left:1558px;top:772px" width="41" height="20" fill="none"><circle cx="8" cy="9" r="7" stroke="#999" fill="#eee"/><path d="M4 9h8" stroke="#333" stroke-width="1.500"/><path d="M26 9h15" stroke="#555" stroke-width="1.500"/></svg>

<!-- taskbar -->
<div style="left:0;top:823px;width:1599px;height:57px;background:#d4d0c8;border-top:2px solid #eee;box-sizing:border-box"></div>
<div style="left:100px;top:830px;width:2px;height:50px;background:#a8a4a0;border-right:1px solid #fff"></div>
<div style="left:1397px;top:830px;width:1px;height:50px;background:#999;border-right:1px solid #fff"></div>
<div class="tb" style="left:1px;top:828px;width:47px;font-size:12.500px;padding-left:19px"><svg width="16" height="16"><path d="M1 4l6-2v6H1z" fill="#d8482a"/><path d="M8 2l6-1v7H8z" fill="#5aa830"/><path d="M1 9h6v5l-6-1z" fill="#2a70c8"/><path d="M8 9h6v6l-6-1z" fill="#e8b820"/></svg>开始</div>
<svg class="a" style="left:60px;top:852px" width="20" height="20"><circle cx="6" cy="6" r="4.500" fill="#60b040"/><circle cx="14" cy="6" r="4.500" fill="#3aa0d8"/><circle cx="6" cy="14" r="4.500" fill="#e8b820"/><circle cx="14" cy="14" r="4.500" fill="#d85040"/></svg>
<svg class="a" style="left:118px;top:830px" width="18" height="18"><circle cx="9" cy="9" r="8" fill="#eee" stroke="#bbb"/><path d="M9 1L4 15h5z" fill="#38a838"/><path d="M9 1l5 14H9z" fill="#d83030"/></svg>
<div class="tb" style="left:144px;top:828px;width:153px;font-size:12.500px"><svg width="16" height="17"><rect x="2" y="1" width="11" height="15" fill="#a8c8e8" stroke="#5878a8"/><rect x="4" y="3" width="7" height="3" fill="#fff"/><path d="M4 9h7M4 12h7" stroke="#48a" stroke-dasharray="2 1"/></svg>计算器</div>
<div class="tb" style="left:300px;top:828px;width:153px;font-size:12.500px"><svg width="16" height="17"><path d="M5 2h9l-3 7H7l-2 6H2z" fill="#38a858"/></svg>工程系统&nbsp;&nbsp;版本: 1.1...</div>
<div class="tb" style="left:456px;top:828px;width:154px;font-size:12px"><svg width="16" height="17"><rect x="2" y="1" width="11" height="15" fill="#fff" stroke="#88a"/><path d="M3 4h9M3 7h9M3 10h9M3 13h9" stroke="#2878d0" stroke-width="1.500"/></svg>制作规范 (Ver:1.0.6)</div>
<div class="tb" style="left:612px;top:828px;width:153px;font-size:12.500px"><svg width="16" height="17"><path d="M8 1l2 5 5 0-4 4 2 6-5-3-5 3 2-6-4-4 5 0z" fill="#e89020" stroke="#c05010"/></svg>兴森快捷衡阳分公司...</div>
<div class="tb" style="left:768px;top:828px;width:152px;padding-left:23px"><svg width="16" height="17"><rect x="1" y="1" width="14" height="15" fill="#22308a"/><rect x="4" y="1" width="8" height="5" fill="#ddd"/><rect x="3" y="9" width="10" height="6" fill="#e04040"/></svg>Total Commander 7.0 p...</div>
<div class="tb" style="left:923px;top:828px;width:154px"><svg width="16" height="17"><rect x="1" y="1" width="14" height="15" rx="2" fill="#2a90e0"/><path d="M5 14V7h7M7 4h6M5 9h5" stroke="#fff" stroke-width="2" fill="none"/></svg>P3值班</div>
<div class="tb" style="left:1079px;top:828px;width:150px"><svg width="16" height="17"><rect x="1" y="1" width="14" height="15" rx="2" fill="#2a90e0"/><path d="M5 14V7h7M7 4h6M5 9h5" stroke="#fff" stroke-width="2" fill="none"/></svg>赵成捷</div>
<div class="tb" style="left:1232px;top:828px;width:152px"><svg width="16" height="17"><circle cx="8" cy="8.500" r="7" fill="#7fb8a0" stroke="#256"/><circle cx="8" cy="8.500" r="3" fill="#38c"/></svg>get.exe</div>

<div class="tb" style="left:110px;top:853px;width:159px;padding-left:23px"><svg width="16" height="16"><use href="#xi"/></svg>Engineering Toolkit 9.07...</div>
<div class="tb" style="left:270px;top:853px;width:158px;padding-left:23px"><svg width="16" height="16"><use href="#xi"/></svg>Progress</div>
<div class="tb" style="left:430px;top:853px;width:160px;padding-left:23px"><svg width="16" height="16"><use href="#xi"/></svg>Graphic Editor 9.07b2 (0...</div>
<div class="tb" style="left:591px;top:853px;width:158px;padding-left:23px"><svg width="16" height="16"><use href="#xi"/></svg>6v39p001a0 - main_qa</div>
<div class="tb" style="left:752px;top:853px;width:159px;background:#fff;padding-left:23px;font-weight:bold;border-color:#666 #fff #fff #666"><svg width="16" height="17"><rect x="2" y="1" width="12" height="15" fill="#dde6ee" stroke="#446"/><rect x="4" y="3" width="5" height="3" fill="#e0a030"/><path d="M4 9h8M4 11h8M4 13h8" stroke="#668"/></svg>6v39p001a0.txt - 写...</div>
<div class="tb" style="left:913px;top:853px;width:159px;padding-left:23px"><svg width="16" height="17"><rect x="4" y="1" width="11" height="15" fill="#fff" stroke="#888"/><rect x="1" y="4" width="9" height="9" fill="#2c8c3c"/><path d="M3 6l5 5M8 6l-5 5" stroke="#fff"/></svg>6V39P001A0-预审指示....</div>
<div class="tb" style="left:1075px;top:853px;width:158px;padding-left:23px"><svg width="16" height="17"><rect x="4" y="1" width="11" height="15" fill="#fff" stroke="#888"/><rect x="1" y="4" width="9" height="9" fill="#2c8c3c"/><path d="M3 6l5 5M8 6l-5 5" stroke="#fff"/></svg>6V39P001A0制作单.xls ...</div>

<!-- tray -->
<div style="left:1427px;top:828px;width:172px;height:52px;border:1px solid #888;border-right:0;box-sizing:border-box;border-bottom:0"></div>
<svg class="a" style="left:1405px;top:830px" width="194" height="50" fill="none">
<path d="M2 7h15v9H2z" fill="#bbb" stroke="#888"/><path d="M4 10h11M4 13h11" stroke="#eee" stroke-dasharray="1 1"/><path d="M10 7c0-3 3-2 6-5" stroke="#999"/>
<rect x="4" y="24" width="7" height="5" stroke="#000"/><rect x="1" y="27" width="7" height="4" stroke="#000" fill="#fff"/><path d="M2 45h8l-4 4zM2 35h8l-4 4z" fill="#222"/>
<path d="M28 8l3-3 3 3M28 12l3-3 3 3" stroke="#000" stroke-width="1.200"/>
<ellipse cx="53" cy="10" rx="6" ry="8" fill="#123a70"/><path d="M50 7l6 6-3 3V4l3 3-6 6" stroke="#fff"/>
<rect x="71" y="2" width="13" height="13" rx="3" fill="#2a88d8"/><circle cx="77" cy="9" r="4" fill="#fff"/><rect x="76" y="14" width="9" height="4" fill="#50c030"/>
<path d="M100 3l6 2 6-2v9l-6 6-6-6z" fill="#48a038"/><path d="M107 6l-4 5h3l-2 4 5-6h-3z" fill="#fff"/>
<rect x="46" y="25" width="15" height="15" rx="2" fill="#2a90e0"/><path d="M50 38V31h8M52 28h7" stroke="#fff" stroke-width="2"/>
<path d="M70 28h10v7l-2 3h-6l-2-3zM73 25v3M77 25v3M75 38v4" stroke="#444" fill="#fff"/>
<path d="M104 30a6 6 0 1 0-6 8" stroke="#d82020" stroke-width="3"/><rect x="99" y="33" width="11" height="8" fill="#eed890" stroke="#b89040"/>
<rect x="175" y="27" width="15" height="12" fill="#2050a0" stroke="#668"/><rect x="177" y="35" width="11" height="2" fill="#8aa"/>
</svg>
<div style="left:1536px;top:837px;font-size:11.500px;line-height:15px;color:#222">16:15</div>
<div style="left:1532px;top:855px;font-size:12px;line-height:16px;color:#222">星期五</div>
<div style="left:1528px;top:877px;font-size:11px;line-height:14px;color:#222">2016/3/4</div>
</div>
</body></html>
